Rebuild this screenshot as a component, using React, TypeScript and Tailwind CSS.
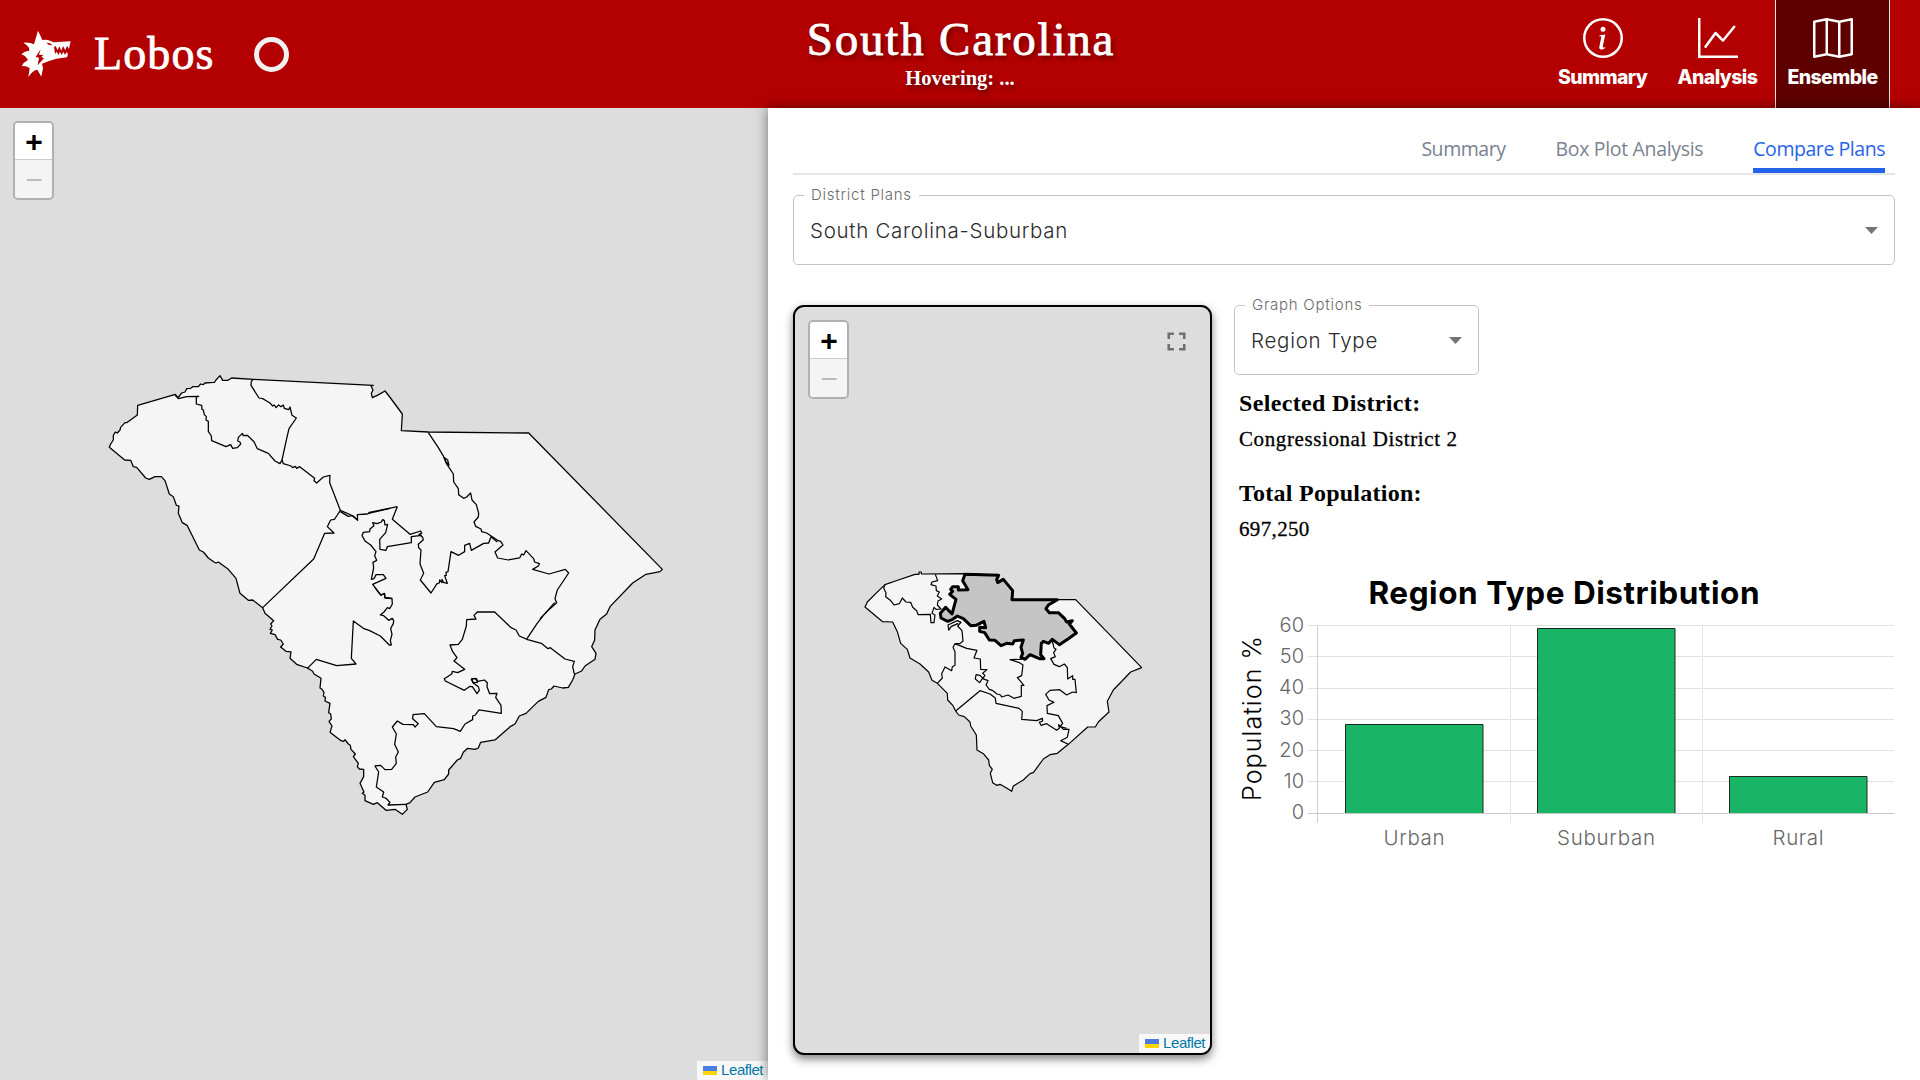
import React from 'react';
import { BsInfoCircle, BsGraphUp, BsMap } from 'react-icons/bs';
import { MdFullscreen } from 'react-icons/md';

type Shift = [number, number];

const move = (points: string, [dx, dy]: Shift) =>
  points
    .trim()
    .split(/\s+/)
    .map((p) => {
      const [x, y] = p.split(',').map(Number);
      return `${x + dx},${y + dy}`;
    })
    .join(' ');

const EAST: Shift = [840, 0];
const SOUTH: Shift = [450, 690];

const stateOutline = [
  '58,262 62,252 70,240 70,226 76,216 82,219 90,210 92,202 105,188 110,188 142,165 143,136 256,103 258,109 265,112 275,99 285,96 290,86 302,85 308,80 325,80 332,72 340,74 345,69 360,68 373,67 378,60 390,47 398,61 414,61 425,54 490,58',
  move('10,76 3,78 9,90 4,100 7,113 22,106 45,93 57,108 97,162 94,212 175,216 476,219 877,628 870,635 828,643 788,669 720,740 710,762 690,778', EAST),
  move('1080,88 1065,120 1064,150 1055,170 1068,190 1065,208 1035,228 1025,243 1005,252 998,270 985,292 968,294 942,288 934,297 926,299 918,322 895,334 858,370 838,378 825,402 812,409 765,450 722,457 715,474 705,478 683,475 670,487 662,505 652,510 626,540 626,552 613,569 583,577 563,606 525,621 510,638 498,643 502,658 487,673 465,658 438,661 412,638 400,643 375,632 375,616 367,610 372,606 360,580 371,560 371,538 358,537 352,530 355,520 340,500 346,492 333,478 331,466 325,462 315,449 311,454 303,452 270,427 276,408 267,394 274,387 272,372 266,368 270,340 255,333 256,322 250,318 252,307 246,298 240,294 243,265 222,252 218,244 202,234 170,223 150,205 153,186 138,184 122,171 130,162 122,150 113,148 105,134 91,130 97,120 90,118 96,108 92,102 101,92 75,70 68,53 38,30 25,31 0,10', SOUTH),
  '438,655 415,628 385,606 378,609 372,606 355,594 340,576 328,570 292,497 277,488 265,460 267,438 259,436 250,410 238,402 225,362 214,350 195,350 178,358 167,354 140,322 130,320 122,301 104,300',
].join(' ');

const currentBorders = [
  '256,103 265,116 278,113 290,110 326,109 319,111 319,132 335,136 336,148 340,150 343,164 349,170 348,180 355,184 355,214 364,228 365,242 408,260 422,254 428,265 442,263 452,252 450,246 443,243 445,232 457,220 460,227 472,226 492,245 502,266 535,280 555,303 570,311 576,300 580,311 603,318 608,323 616,319 620,325 629,320 674,355 672,362 680,369 700,351 720,346 719,368 751,451 790,468 803,481 802,464 832,462 845,458 900,445',
  '490,58 484,64 483,76 507,114 518,116 540,129 548,138 553,135 558,143 566,135 573,140 580,135 583,145 596,149 600,141 606,166 619,174 597,206 590,236 576,300',
  '751,451 740,468 733,478 722,480 712,500 732,519 704,520 671,597 518,743',
  '751,455 775,469 786,467 803,480',
  move('175,218 187,236 205,263 219,286 229,310 250,342 251,366 265,386 266,404 281,415 290,411 302,399 306,420 319,434 326,460 325,471 312,486 317,499 333,507 335,515 350,519 385,542 392,544 399,555 375,576 383,594 415,600 449,594 455,582 461,585 468,572 491,596 494,606 508,611 505,618 488,628 537,642 586,628 596,639 562,690 555,716 560,728 540,746 510,776', EAST),
  move('222,292 233,300 237,316 228,306 222,292', EAST),
  move('60,455 82,440 67,478 120,523 152,513 155,520 147,523 158,532 160,539 145,553 146,563 153,570 150,612 161,640 151,660 183,699 201,671 208,669 209,660 216,668 216,658 220,667 232,670 224,647 229,646 228,637 234,635 243,575 266,586 284,575 284,556 299,550 304,571 341,550 356,549 363,530 382,546', [840, 0]).replace('900,455 ', ''),
  move('-5,458 82,440', EAST),
  move('155,526 124,530 124,548 52,560 48,571 30,568 29,538 47,518 53,493 45,495 43,482 38,479 34,486 21,491 8,488 12,497 0,507 -1,515 -20,517 -24,527 -14,544 2,555 18,575 14,587 20,601 9,607 11,624 4,658 12,656 18,644 40,644 48,655 8,673 32,705 44,701 45,714 66,716', EAST),
  move('405,-8 414,5 424,16 433,10 435,22 456,25 457,42 449,56 442,53 432,66 421,75 431,77 446,91 457,85 461,92 460,101 452,115 456,133 451,151 454,165 448,165 421,138 389,122 370,115 340,93 334,205 348,222 290,227 229,208 202,235', SOUTH),
  move('861,146 891,101 912,74 944,38', SOUTH),
  move('1003,252 998,230 1003,214 975,207 931,173 924,176 904,160 863,149 838,138 828,120 812,112 764,66 712,66 702,76 708,87 680,89 679,108 667,148 655,163 630,165 638,185 651,203 642,213 674,238 653,248 637,244 635,252 613,266 616,273 673,301 690,289 697,290 711,311 718,301 715,290 699,278 694,268 705,265 713,274 733,270 742,278 741,290 749,311 771,310 767,322 783,346 784,370 717,360 706,375 698,378 698,389 675,402 661,424 641,416 589,410 553,371 519,374 518,386 535,401 525,411 520,404 489,403 472,393 457,411 469,432 464,463 475,486 467,501 469,520 455,538 435,539 422,526 405,528 416,546 409,591 431,606 427,621 437,624 450,637 444,645 498,643', SOUTH),
  move('694,266 710,266 712,277 700,278 694,266', SOUTH),
];

const planOutline =
  '45,141 52,126 80,98 105,74 145,60 195,43 207,43 207,36 214,36 214,42 345,41 446,46 440,58 443,68 460,58 488,92 486,119 622,119 677,119 875,323 842,336 790,390 772,424 777,456 745,486 736,501 713,501 655,553 622,580 600,584 580,597 550,638 540,641 520,660 490,678 485,694 466,682 450,673 440,676 428,668 421,640 427,628 418,616 416,600 400,581 381,570 379,525 362,498 360,486 343,470 326,465 317,453 309,437 293,420 292,400 262,370 246,361 236,336 210,312 180,294 172,268 152,250 142,215 128,186 98,185';

const planBorders = [
  '105,74 101,85 108,98 107,110 120,120 132,135 148,131 157,114 168,126 182,127 188,142 200,152 204,164 241,163 243,188 252,188 255,165 246,160 252,142 258,148 273,147 262,135 264,123 275,117 262,108 268,96 259,92 258,78 243,74 246,66 263,62 256,43',
  '296,211 294,195 322,182 333,187 323,198 336,212 339,243 330,251 315,251 309,262 315,275 315,316 307,320 305,332 285,321 275,341 277,354 262,370',
  '296,211 303,200 325,190',
  '315,251 350,265 381,271 372,294 391,297 392,328 411,329 398,340 405,346 398,356 414,362 408,375 418,388 427,391 441,402 452,405 455,411 474,405 492,415 514,409 514,376 522,376 502,353 515,347 519,315 506,307 480,299 515,298',
  '378,344 390,346 398,354 389,368 376,357 378,344',
  '317,453 390,392 420,402 436,414 438,430 507,445 517,454 515,478 560,482 577,475 578,483 568,487 573,496 590,491 620,511 628,505 626,494 640,508 657,508 652,532 632,542 655,553',
  '607,243 612,264 618,268 611,278 616,290 602,296 612,313 628,320 643,312 652,323 653,357 668,347 668,358 675,358 679,398 668,396 650,405 629,389 600,391 587,403 597,420 612,427 591,437 592,460 625,467 638,490 630,500 650,505',
];

const selectedDistrict =
  '345,43 446,46 440,58 443,68 460,58 488,92 486,119 622,119 595,135 588,146 598,158 625,158 644,176 650,186 667,182 658,192 679,219 655,236 628,254 607,238 596,250 580,244 574,250 572,284 582,296 568,296 540,284 525,298 513,292 518,280 513,262 520,240 493,242 488,252 470,250 453,257 435,241 418,240 404,218 389,214 389,202 407,203 402,184 378,196 362,197 340,176 322,168 308,178 293,184 273,174 271,160 287,142 306,162 318,118 299,103 308,94 302,88 308,80 325,80 325,90 354,89 338,62';

function WolfLogo() {
  return (
    <svg className="w-[50px] h-[48px]" viewBox="34 32 150 144">
      <path
        fill="#fff"
        d="M85 34 94 53 98 62 Q112 60 121 64 L132 69 183 66 180 79 178 89 172 79 167 93 160 80 155 94 149 81 144 93 138 81 133 82 136 104 141 97 146 107 151 97 156 107 161 97 166 107 170 99 175 103 172 114 140 118 Q118 124 97 133 L100 146 95 172 83 151 Q70 152 56 173 L60 147 Q48 138 36 141 Q42 128 55 122 Q46 106 35 106 Q42 96 58 95 Q64 84 41 70 Q60 68 73 75 Q80 50 85 34Z"
      />
      <path fill="#b30000" d="M93 90 78 113 88 115 84 138 103 117 95 113 101 107 88 106ZM110 70 Q122 70 128 77 Q118 80 110 70Z" />
    </svg>
  );
}

function ZoomControl() {
  return (
    <div className="w-[41px] h-[79px] rounded-[5px] border-2 border-black/20 bg-clip-padding flex flex-col overflow-hidden font-['Liberation_Mono'] font-bold text-[30px]">
      <div className="h-[37px] pt-[5px] pl-px bg-white text-black border-b border-[#ccc] flex items-center justify-center leading-none">
        <span>+</span>
      </div>
      <div className="grow pt-[5px] pl-px bg-[#f4f4f4] text-[#bbb] font-normal flex items-center justify-center leading-none">
        <span>−</span>
      </div>
    </div>
  );
}

function Attribution() {
  return (
    <div className="absolute right-0 bottom-0 h-[19px] pl-[6px] pr-[5px] pb-px bg-white/80 flex items-center gap-1 font-['Liberation_Sans'] text-[15px] leading-[18px] tracking-[-0.45px] text-[#0078a8]">
      <span className="w-[14px] h-[9px] mt-px flex flex-col">
        <span className="h-[5px] bg-[#4c7be1]" />
        <span className="h-[4px] bg-[#ffd500]" />
      </span>
      <span>Leaflet</span>
    </div>
  );
}

function NavItem({ icon, label, active }: { icon: React.ReactNode; label: string; active?: boolean }) {
  return (
    <div
      className={
        active
          ? 'w-[115px] h-full pt-[18px] flex flex-col items-center bg-[#5e0000] border-x border-white/90'
          : 'w-[115px] h-full pt-[18px] flex flex-col items-center'
      }
    >
      {icon}
      <span className="mt-[7px] font-['Inter'] font-extrabold text-[19.5px] leading-6 tracking-[-0.6px]">{label}</span>
    </div>
  );
}

function SelectBox({ label, value, className }: { label: string; value: string; className: string }) {
  return (
    <div className={`${className} relative h-[70px] rounded-[5px] border border-[#c4c4c4] flex items-center justify-between pl-4 pr-[16px] font-['Inter']`}>
      <span className="absolute left-[10px] -top-[11px] px-[7px] bg-white text-[15px] leading-5 text-[#6b6b6b] font-light tracking-[0.75px]">{label}</span>
      <span className="pt-[2px] text-[20.5px] text-[#2b2b2b] font-light tracking-[0.72px]">{value}</span>
      <svg width="13" height="7" viewBox="0 0 13 7">
        <path d="M0 0H13L6.5 7Z" fill="#757575" />
      </svg>
    </div>
  );
}

const bars = [
  { label: 'Urban', x: 111.5, y: 164.5, center: 180, width: 61 },
  { label: 'Suburban', x: 303.5, y: 68.5, center: 372, width: 98 },
  { label: 'Rural', x: 495.5, y: 216.5, center: 564, width: 51 },
];

function Chart() {
  return (
    <svg className="w-[661px] h-[300px] block font-['Inter']" viewBox="0 0 661 300">
      <text x="330" y="43.5" textAnchor="middle" fontSize="31.5" fontWeight="700" textLength="391">Region Type Distribution</text>
      <text transform="translate(27 158.5) rotate(-90)" textAnchor="middle" fontSize="25" fontWeight="300" textLength="165">Population %</text>
      {[60, 50, 40, 30, 20, 10, 0].map((t, i) => (
        <g key={t}>
          <rect x="74" y={Math.round(65 + i * 31.25)} width="586" height="1" fill={t === 0 ? '#c8c8c8' : '#e2e2e2'} />
          <text x="70" y={71.5 + i * 31.25} textAnchor="end" fontSize="20" fontWeight="300" fill="#666">{t}</text>
        </g>
      ))}
      {[83, 276, 468].map((x, i) => (
        <rect key={x} x={x} y="66" width="1" height="197" fill={i === 0 ? '#cfcfcf' : '#e6e6e6'} />
      ))}
      {bars.map((b) => (
        <g key={b.label}>
          <rect x={b.x} y={b.y} width="137.5" height={253 - b.y} fill="#1ab466" />
          <path d={`M${b.x} 253V${b.y}h137.5V253`} fill="none" stroke="#1c2a22" strokeWidth="1" />
          <text x={b.center} y="285" textAnchor="middle" fontSize="20.5" fontWeight="300" fill="#666" textLength={b.width}>{b.label}</text>
        </g>
      ))}
    </svg>
  );
}

export default function App() {
  return (
    <div className="w-[1920px] h-[1080px] flex flex-col overflow-hidden bg-white">
      <header className="h-[108px] shrink-0 bg-[#b30000] text-white grid grid-cols-3">
        <div className="flex items-center pl-[21px]">
          <WolfLogo />
          <span className="ml-[23px] w-[160px] font-['Liberation_Serif'] text-[46px] leading-none tracking-[1.1px] [-webkit-text-stroke:0.8px_white]">Lobos</span>
          <span className="size-[35px] rounded-full border-[5px] border-[#f3f0f2]" />
        </div>
        <div className="flex flex-col items-center pt-[13px] font-['Liberation_Serif'] [text-shadow:2px_3px_5px_rgba(0,0,0,0.5)]">
          <span className="pl-[2px] text-[47px] leading-[52px] tracking-[1.8px] [-webkit-text-stroke:0.8px_white]">South Carolina</span>
          <span className="text-[20.5px] leading-[26px] font-bold">Hovering: ...</span>
        </div>
        <nav className="flex justify-end pr-[30px]">
          <NavItem icon={<BsInfoCircle size={40} />} label="Summary" />
          <NavItem icon={<BsGraphUp size={40} />} label="Analysis" />
          <NavItem icon={<BsMap size={40} />} label="Ensemble" active />
        </nav>
      </header>

      <main className="grow flex min-h-0">
        <section className="relative w-[768px] h-[972px] bg-[#ddd] p-[13px]">
          <svg className="absolute left-0 top-0 w-[768px] h-[972px]" viewBox="0 0 768 972">
            <g transform="translate(90 252) scale(0.33333)" fill="none" stroke="#000" strokeWidth="3.8" strokeLinejoin="round">
              <polygon points={stateOutline} fill="#f5f5f5" />
              {currentBorders.map((p) => (
                <polyline key={p} points={p} />
              ))}
            </g>
          </svg>
          <div className="relative"><ZoomControl /></div>
          <Attribution />
        </section>

        <section className="relative w-[1152px] h-[972px] bg-white px-[25px] shadow-[0_0_12px_rgba(0,0,0,0.5)]">
          <div className="h-[67px] border-b-2 border-[#e5e7eb] flex justify-end items-end pr-[10px] gap-[50px] font-['Open_Sans'] text-[19.5px] text-[#7b8290]">
            <span className="h-[39px] tracking-[-0.45px]">Summary</span>
            <span className="h-[39px] tracking-[-0.33px]">Box Plot Analysis</span>
            <span className="h-[39px] tracking-[-0.45px] text-[#2563eb] border-b-[5px] border-[#2563eb]">Compare Plans</span>
          </div>
          <SelectBox label="District Plans" value="South Carolina-Suburban" className="mt-[20px] w-full" />
          <div className="mt-[40px] flex gap-[22px]">
            <div className="relative w-[419px] h-[750px] rounded-[11px] border-2 border-black bg-[#ddd] overflow-hidden shadow-[0_4px_10px_rgba(0,0,0,0.5)]">
              <svg className="absolute left-0 top-0 w-[415px] h-[746px]" viewBox="0 0 415 746">
                <g transform="translate(55 253) scale(0.33333)" fill="none" stroke="#000" strokeWidth="3.6" strokeLinejoin="round">
                  <polygon points={planOutline} fill="#f5f5f5" />
                  {planBorders.map((p) => (
                    <polyline key={p} points={p} />
                  ))}
                  <polygon points={selectedDistrict} fill="#c5c5c5" strokeWidth="9" />
                </g>
              </svg>
              <div className="relative flex justify-between pl-[13px] pt-[13px] pr-[18px]">
                <ZoomControl />
                <MdFullscreen size={31} color="#6f6f6f" className="mt-[6px]" />
              </div>
              <Attribution />
            </div>
            <div className="w-[661px] font-['Liberation_Serif'] text-black">
              <SelectBox label="Graph Options" value="Region Type" className="w-[245px]" />
              <div className="pl-[5px]">
                <p className="mt-[13px] text-[24px] leading-[30px] font-bold tracking-[0.35px]">Selected District:</p>
                <p className="mt-[8px] text-[21px] leading-[26px] tracking-[0.6px] [-webkit-text-stroke:0.3px_black]">Congressional District 2</p>
                <p className="mt-[26px] text-[24px] leading-[30px] font-bold tracking-[0.25px]">Total Population:</p>
                <p className="mt-[8px] text-[21px] leading-[26px] tracking-[0.35px] [-webkit-text-stroke:0.3px_black]">697,250</p>
              </div>
              <div className="mt-[18px]"><Chart /></div>
            </div>
          </div>
        </section>
      </main>
    </div>
  );
}
